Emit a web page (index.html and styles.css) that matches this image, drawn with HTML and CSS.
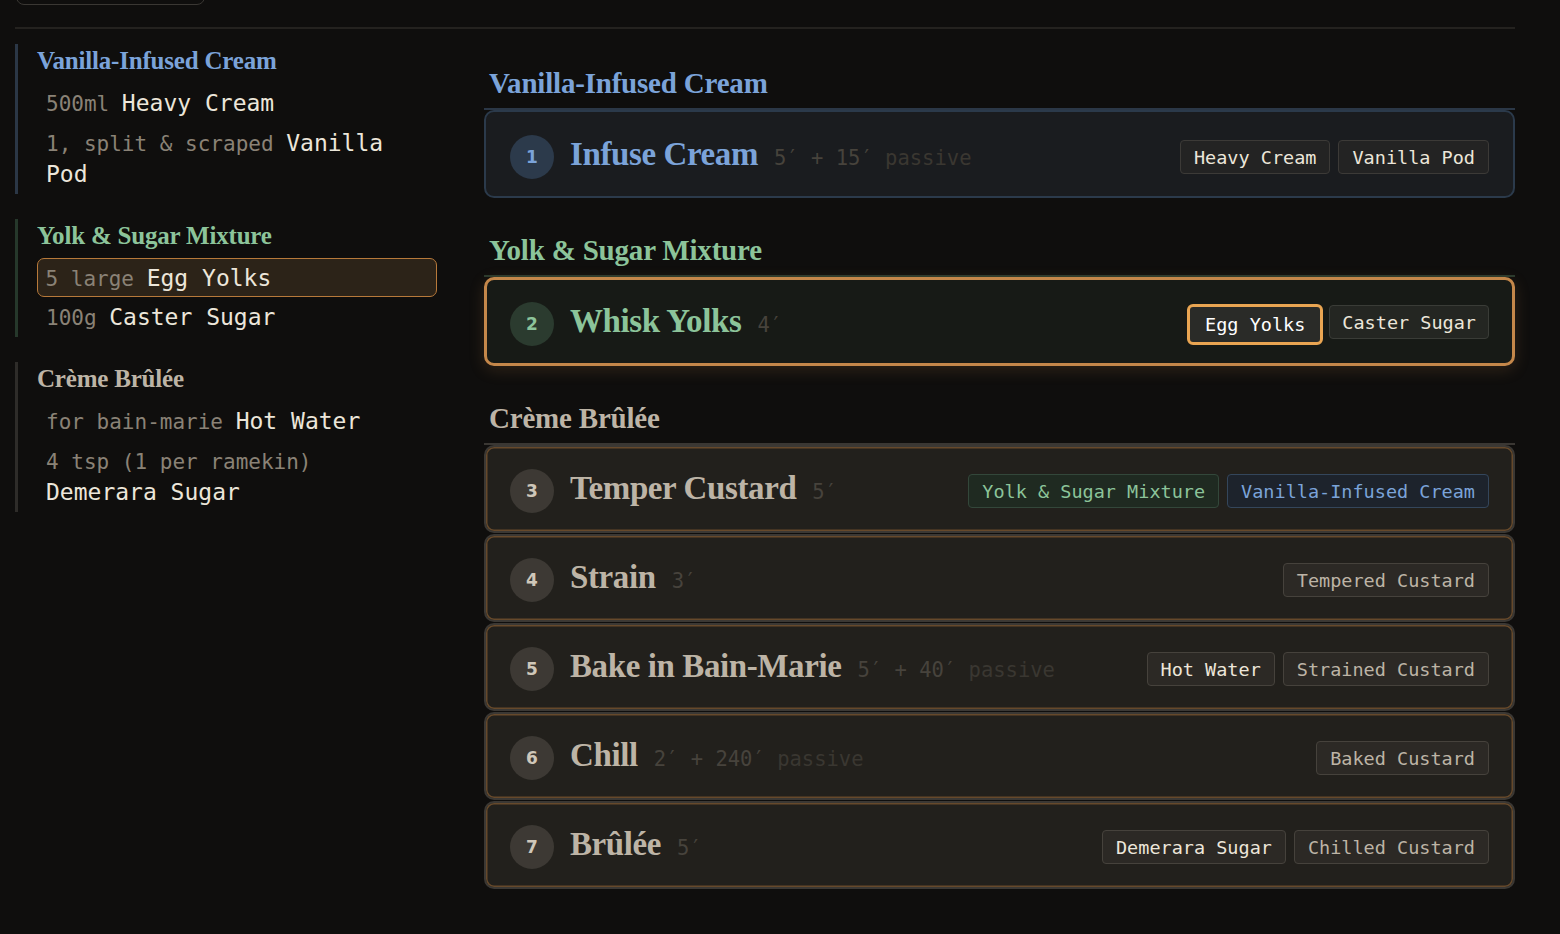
FILE: index.html
```html
<!DOCTYPE html>
<html lang="en">
<head>
    <meta charset="UTF-8">
    <meta name="viewport" content="width=device-width, initial-scale=1.0">
    <title>Crème Brûlée</title>
    <link rel="stylesheet" href="styles.css">
</head>
<body>
    <div class="page">
        <div class="toolbar">
            <button class="tool-btn">Ingredients</button>
        </div>

        <div class="layout">
            <!-- ingredient list, grouped by component -->
            <aside class="sidebar">
                <div class="group group-blue">
                    <h3 class="group-title">Vanilla-Infused Cream</h3>
                    <div class="ing"><span class="amt">500ml </span><span class="name">Heavy Cream</span></div>
                    <div class="ing"><span class="amt">1, split &amp; scraped </span><span class="name">Vanilla Pod</span></div>
                </div>

                <div class="group group-green">
                    <h3 class="group-title">Yolk &amp; Sugar Mixture</h3>
                    <div class="ing ing-active"><span class="amt">5 large </span><span class="name">Egg Yolks</span></div>
                    <div class="ing"><span class="amt">100g </span><span class="name">Caster Sugar</span></div>
                </div>

                <div class="group group-plain">
                    <h3 class="group-title">Crème Brûlée</h3>
                    <div class="ing"><span class="amt">for bain-marie </span><span class="name">Hot Water</span></div>
                    <div class="ing"><span class="amt">4 tsp (1 per ramekin) </span><span class="name">Demerara Sugar</span></div>
                </div>
            </aside>

            <!-- method steps -->
            <main class="method">
                <section class="section section-blue">
                    <h2 class="section-title">Vanilla-Infused Cream</h2>
                    <div class="card-list">
                        <div class="card">
                            <span class="badge">1</span>
                            <div class="card-head">
                                <span class="card-title">Infuse Cream</span>
                                <span class="time">5′ + 15′ <span class="passive">passive</span></span>
                            </div>
                            <div class="tags">
                                <span class="tag">Heavy Cream</span>
                                <span class="tag">Vanilla Pod</span>
                            </div>
                        </div>
                    </div>
                </section>

                <section class="section section-green">
                    <h2 class="section-title">Yolk &amp; Sugar Mixture</h2>
                    <div class="card-list">
                        <div class="card card-current">
                            <span class="badge">2</span>
                            <div class="card-head">
                                <span class="card-title">Whisk Yolks</span>
                                <span class="time">4′</span>
                            </div>
                            <div class="tags">
                                <span class="tag tag-active">Egg Yolks</span>
                                <span class="tag">Caster Sugar</span>
                            </div>
                        </div>
                    </div>
                </section>

                <section class="section section-plain">
                    <h2 class="section-title">Crème Brûlée</h2>
                    <div class="card-list">
                        <div class="card card-ready">
                            <span class="badge">3</span>
                            <div class="card-head">
                                <span class="card-title">Temper Custard</span>
                                <span class="time">5′</span>
                            </div>
                            <div class="tags">
                                <span class="tag tag-green">Yolk &amp; Sugar Mixture</span>
                                <span class="tag tag-blue">Vanilla-Infused Cream</span>
                            </div>
                        </div>
                        <div class="card card-ready">
                            <span class="badge">4</span>
                            <div class="card-head">
                                <span class="card-title">Strain</span>
                                <span class="time">3′</span>
                            </div>
                            <div class="tags">
                                <span class="tag tag-muted">Tempered Custard</span>
                            </div>
                        </div>
                        <div class="card card-ready">
                            <span class="badge">5</span>
                            <div class="card-head">
                                <span class="card-title">Bake in Bain-Marie</span>
                                <span class="time">5′ + 40′ <span class="passive">passive</span></span>
                            </div>
                            <div class="tags">
                                <span class="tag">Hot Water</span>
                                <span class="tag tag-muted">Strained Custard</span>
                            </div>
                        </div>
                        <div class="card card-ready">
                            <span class="badge">6</span>
                            <div class="card-head">
                                <span class="card-title">Chill</span>
                                <span class="time">2′ + 240′ <span class="passive">passive</span></span>
                            </div>
                            <div class="tags">
                                <span class="tag tag-muted">Baked Custard</span>
                            </div>
                        </div>
                        <div class="card card-ready">
                            <span class="badge">7</span>
                            <div class="card-head">
                                <span class="card-title">Brûlée</span>
                                <span class="time">5′</span>
                            </div>
                            <div class="tags">
                                <span class="tag">Demerara Sugar</span>
                                <span class="tag tag-muted">Chilled Custard</span>
                            </div>
                        </div>
                    </div>
                </section>
            </main>
        </div>
    </div>
</body>
</html>
```

FILE: styles.css
```css
body {
    margin: 0;
    background-color: #0f0e0d; /* near black */
    color: #ece6da; /* cream text */
    font-family: 'DejaVu Sans Mono', monospace;
}

.page {
    max-width: 1500px;
    padding: 0 15px;
}

/* top bar, scrolled mostly out of view */
.toolbar {
    display: flex;
    align-items: flex-start;
    height: 27px;
    border-bottom: 2px solid #24221f;
    overflow: hidden;
}

.tool-btn {
    width: 189px;
    height: 36px;
    margin: -31px 0 0 1px;
    background: transparent;
    border: 1.5px solid #3a3733;
    border-radius: 8px;
    color: transparent;
    font-family: 'DejaVu Sans Mono', monospace;
}

.layout {
    display: grid;
    grid-template-columns: 422px 1fr;
    column-gap: 47px;
    padding-top: 15px;
}

/* ---------- sidebar ---------- */

.group {
    border-left: 3px solid #2e2c29;
    padding-left: 19px;
    margin-bottom: 25px;
}

.group-blue { border-left-color: #2b3746; }
.group-green { border-left-color: #26382b; }

.group-title {
    margin: 0 0 5px;
    font-family: 'Liberation Serif', serif;
    font-weight: bold;
    font-size: 25px;
    line-height: 34px;
    letter-spacing: -0.2px;
    color: #bdb4a6;
}

.group-blue .group-title { color: #7ba3d9; }
.group-green .group-title { color: #8cc49a; }

.ing {
    padding: 4px 8px 3px;
    border: 1px solid transparent;
    border-radius: 7px;
    font-size: 23px;
    line-height: 31px;
}

.ing-active {
    background: #2c2318;
    border: 1.5px solid #b7793a;
    padding: 3.5px 7.5px 2.5px;
}

.amt {
    font-size: 21px;
    line-height: 26px;
    color: #8a8276;
}

.name {
    color: #ece6da;
}

/* ---------- method ---------- */

.method {
    padding-top: 19px;
}

.section {
    margin-bottom: 32px;
}

.section-title {
    margin: 0;
    padding: 0 5px 5px;
    font-family: 'Liberation Serif', serif;
    font-weight: bold;
    font-size: 29px;
    line-height: 40px;
    letter-spacing: -0.2px;
    color: #bdb4a6;
    border-bottom: 2px solid #3a3733;
}

.section-blue .section-title { color: #7ba3d9; border-bottom-color: #2b3746; }
.section-green .section-title { color: #8cc49a; border-bottom-color: #2a3a2d; }

.card-list {
    display: flex;
    flex-direction: column;
    gap: 1px;
}

.card {
    display: flex;
    align-items: center;
    gap: 16px;
    padding: 23px 24px 17px;
    background: #1a1c1f;
    border: 2px solid #2b3a4b;
    border-radius: 10px;
}

.card-current {
    background: #171a16;
    border: 3px solid #c4874a;
    padding: 22px 23px 17px;
    box-shadow: 0 4px 16px rgba(196, 135, 74, 0.18);
}

.card-ready {
    background: #22201c;
    border-color: #3b3834;
    box-shadow: inset 0 0 0 1.5px #66492b;
    padding: 22px 24px 18px;
}

.badge {
    flex: none;
    width: 44px;
    height: 44px;
    border-radius: 50%;
    display: flex;
    align-items: center;
    justify-content: center;
    background: #2c3a4b;
    color: #7ba3d9;
    font-family: 'DejaVu Sans', sans-serif;
    font-weight: bold;
    font-size: 17px;
}

.card-current .badge { background: #2b3b2f; color: #8cc49a; }
.card-ready .badge { background: #3d3934; color: #cfc7b9; }

.card-head {
    flex: 1;
    display: flex;
    align-items: baseline;
    gap: 16px;
    margin-top: -6px;
}

.card-title {
    font-family: 'Liberation Serif', serif;
    font-weight: bold;
    font-size: 33px;
    letter-spacing: -0.4px;
    color: #7ba3d9;
}

.card-current .card-title { color: #8cc49a; }
.card-ready .card-title { color: #bdb4a6; }

.time {
    font-size: 20.5px;
    color: #47433c;
}

.passive {
    color: #3a3731;
}

.tags {
    display: flex;
    gap: 8px;
}

.tag {
    height: 34px;
    box-sizing: border-box;
    display: flex;
    align-items: center;
    padding: 0 13px;
    background: #232323;
    border: 1.5px solid #3c3a37;
    border-radius: 4px;
    font-size: 18.5px;
    color: #ece6da;
}

.card-current .tag { background: #242622; border-color: #3a3c37; margin-top: 2px; padding: 0 12px; }
.card-ready .tag { background: #2c2925; border-color: #46423c; }

.card-current .tag-active {
    height: 41px;
    margin-top: 1px;
    margin-right: -2px;
    padding: 0 15px;
    background: #2a2b28;
    border: 3px solid #e9a552;
    border-radius: 6px;
    color: #ffffff;
}

.card-ready .tag-muted { color: #bdb4a6; }
.card-ready .tag-green { background: #1f2a21; border-color: #33473a; color: #8cc49a; }
.card-ready .tag-blue { background: #1d232c; border-color: #34465b; color: #7ba3d9; }
```
